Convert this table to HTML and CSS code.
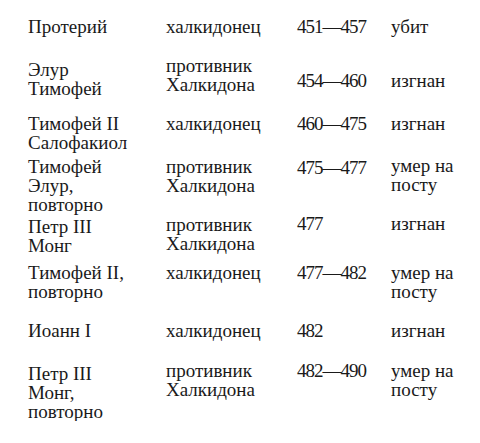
FILE: index.html
```html
<!DOCTYPE html>
<html lang="ru">
<head>
<meta charset="utf-8">
<link rel="stylesheet" href="styles.css">
</head>
<body>
<table class="list">
  <colgroup>
    <col class="c-name"><col class="c-pos"><col class="c-years"><col class="c-fate">
  </colgroup>
  <tr class="r1">
    <td>Протерий</td><td>халкидонец</td><td class="num">451—457</td><td>убит</td>
  </tr>
  <tr class="r2">
    <td class="pt4">Элур<br>Тимофей</td><td>противник<br>Халкидона</td><td class="num pt15">454—460</td><td class="pt15">изгнан</td>
  </tr>
  <tr class="r3">
    <td>Тимофей II<br>Салофакиол</td><td>халкидонец</td><td class="num">460—475</td><td>изгнан</td>
  </tr>
  <tr class="r4">
    <td class="pt1">Тимофей<br>Элур,<br>повторно</td><td class="pt1">противник<br>Халкидона</td><td class="num pt2">475—477</td><td>умер на<br>посту</td>
  </tr>
  <tr class="r5">
    <td class="pt3">Петр III<br>Монг</td><td class="pt1">противник<br>Халкидона</td><td class="num">477</td><td>изгнан</td>
  </tr>
  <tr class="r6">
    <td>Тимофей II,<br>повторно</td><td>халкидонец</td><td class="num">477—482</td><td>умер на<br>посту</td>
  </tr>
  <tr class="r7">
    <td>Иоанн I</td><td>халкидонец</td><td class="num">482</td><td>изгнан</td>
  </tr>
  <tr class="r8">
    <td class="pt3">Петр III<br>Монг,<br>повторно</td><td>противник<br>Халкидона</td><td class="num">482—490</td><td>умер на<br>посту</td>
  </tr>
</table>
</body>
</html>
```

FILE: styles.css
```css
html, body {
  margin: 0;
  padding: 0;
  background: #ffffff;
}

.list {
  margin: 17px 0 0 28px;
  border-collapse: collapse;
  table-layout: fixed;
  width: 440px;
  font-family: "Liberation Serif", serif;
  font-size: 19px;
  line-height: 19px;
  color: #1a1a1a;
}

.c-name { width: 138px; }
.c-pos { width: 131px; }
.c-years { width: 94px; }
.c-fate { width: 77px; }

.list td {
  padding: 0;
  vertical-align: top;
  white-space: nowrap;
}

.list td.num { letter-spacing: -1px; }

.r1 td { padding-bottom: 20px; }
.r2 td { padding-bottom: 16px; }
.r3 td { padding-bottom: 4px; }
.r4 td { padding-bottom: 0; }
.r5 td { padding-bottom: 8px; }
.r6 td { padding-bottom: 20px; }
.r7 td { padding-bottom: 21px; }
.r8 td { padding-bottom: 0; }

.list td.pt1 { padding-top: 1px; }
.list td.pt2 { padding-top: 2px; }
.list td.pt3 { padding-top: 3px; }
.list td.pt4 { padding-top: 4px; }
.list td.pt15 { padding-top: 15px; }
```
